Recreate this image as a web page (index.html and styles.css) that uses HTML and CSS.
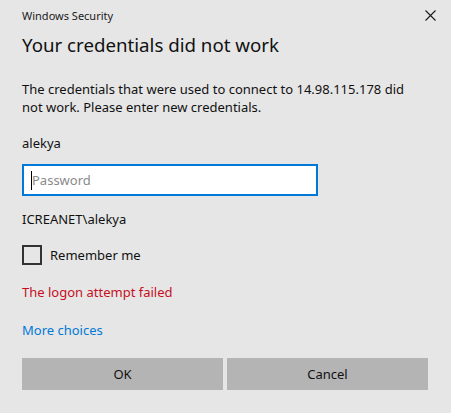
FILE: index.html
```html
<!DOCTYPE html>
<html>
<head>
<meta charset="utf-8">
<link rel="stylesheet" href="styles.css">
</head>
<body>
<div class="dialog">
  <div class="titlebar">
    <span class="app">Windows Security</span>
    <svg class="close" width="11" height="11" viewBox="0 0 11 11"><path d="M0.5 0.5 L10.5 10.5 M10.5 0.5 L0.5 10.5" stroke="#1a1a1a" stroke-width="1.1" fill="none"/></svg>
  </div>
  <h1 class="title">Your credentials did not work</h1>
  <p class="msg">The credentials that were used to connect to 14.98.115.178 did not work. Please enter new credentials.</p>
  <div class="user">alekya</div>
  <div class="input"><span class="caret"></span><span class="ph">Password</span></div>
  <div class="domain">ICREANET\alekya</div>
  <label class="check"><span class="box"></span><span>Remember me</span></label>
  <div class="error">The logon attempt failed</div>
  <div class="more">More choices</div>
  <div class="buttons">
    <div class="btn">OK</div>
    <div class="btn">Cancel</div>
  </div>
</div>
</body>
</html>
```
FILE: styles.css
```css
html, body { margin: 0; padding: 0; }
body {
  background: #e6e6e6;
  font-family: "Noto Sans", "Open Sans", sans-serif;
  color: #000;
  width: 451px;
  height: 413px;
  overflow: hidden;
}
.dialog { padding: 0 23px 0 22px; }
.titlebar {
  display: flex;
  justify-content: space-between;
  align-items: center;
  height: 30px;
  font-size: 11px;
  color: #1a1a1a;
}
.close { margin-right: -8px; margin-top: 1px; }
.title {
  margin: 1px 0 0;
  font-size: 18.7px;
  font-weight: 400;
  line-height: 28px;
  color: #111;
}
.msg {
  margin: 21px 0 0;
  font-size: 13px;
  line-height: 18px;
  width: 400px;
  color: #111;
}
.user { margin-top: 18px; font-size: 13px; line-height: 18px; color: #111; }
.input {
  margin-top: 12px;
  width: 285px;
  height: 28px;
  border: 2px solid #0078d7;
  background: #fff;
  display: flex;
  align-items: center;
  padding-left: 7px;
  box-sizing: content-box;
}
.caret { width: 1px; height: 19px; background: #000; }
.ph { font-size: 13px; color: #8a8a8a; }
.domain { margin-top: 14px; font-size: 13px; line-height: 18px; color: #111; }
.check {
  display: flex;
  align-items: center;
  margin-top: 17px;
  font-size: 13px;
  color: #111;
}
.box {
  width: 16px;
  height: 16px;
  border: 2px solid #333;
  margin-right: 8px;
}
.error { margin-top: 18px; font-size: 13px; line-height: 18px; color: #c50f1f; }
.more { margin-top: 20px; font-size: 13px; line-height: 18px; color: #0078d7; }
.buttons {
  display: grid;
  grid-template-columns: 201px 201px;
  gap: 4px;
  margin-top: 19px;
}
.btn {
  height: 32px;
  background: #b4b4b4;
  display: flex;
  align-items: center;
  justify-content: center;
  font-size: 13px;
  color: #111;
}
```
